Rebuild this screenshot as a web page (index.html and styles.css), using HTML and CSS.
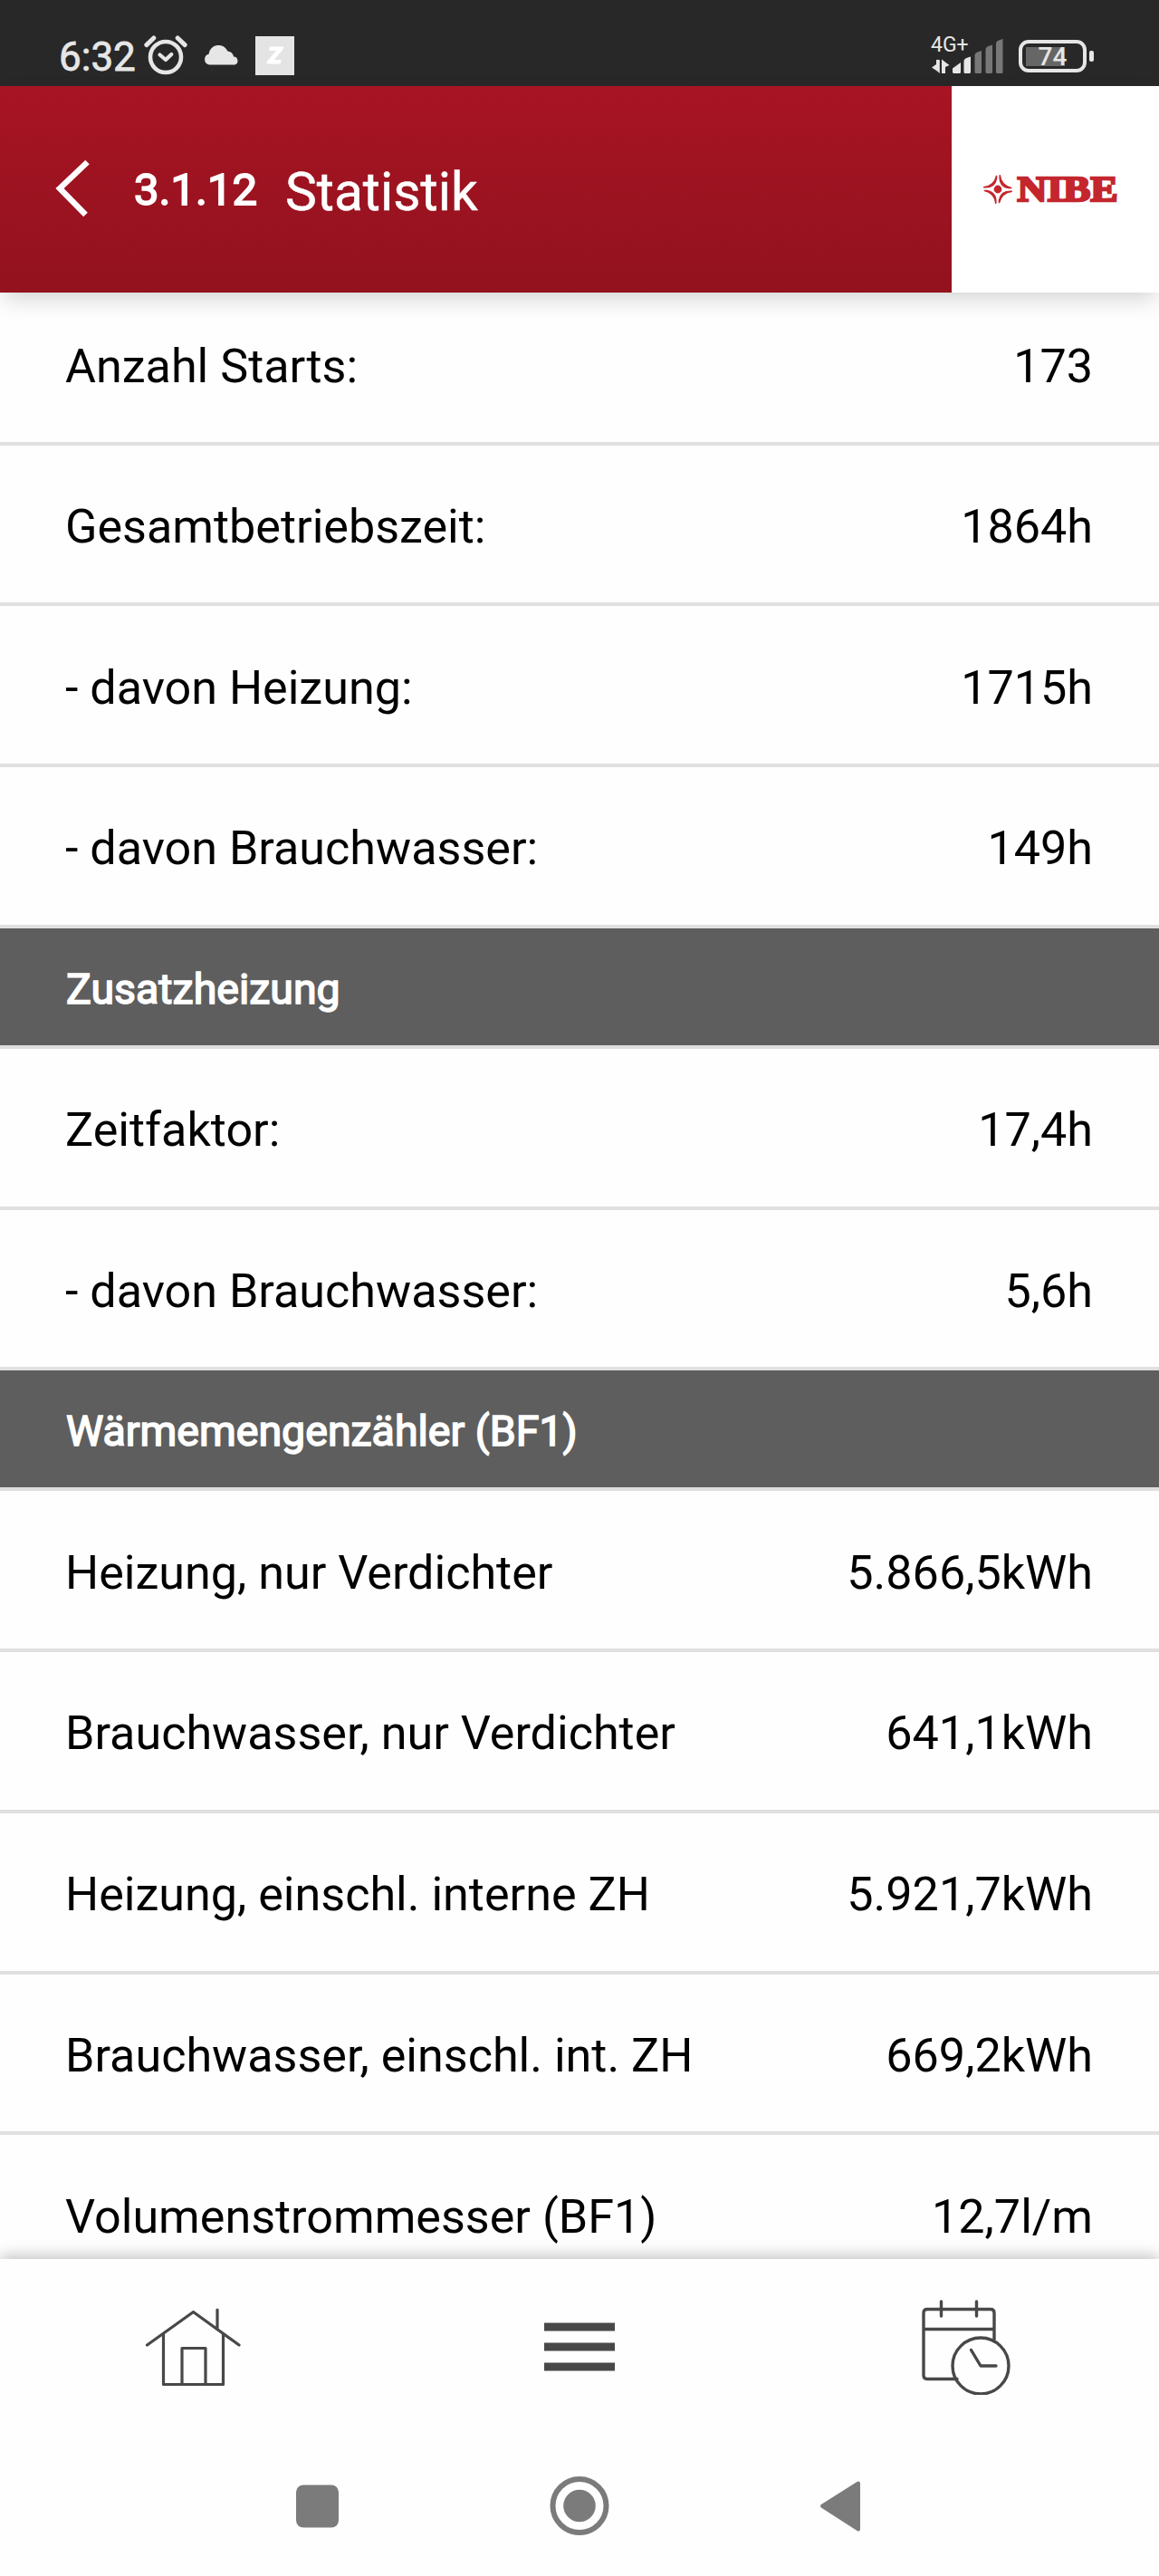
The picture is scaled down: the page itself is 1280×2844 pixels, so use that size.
FILE: index.html
```html
<!DOCTYPE html>
<html lang="de">
<head>
  <meta charset="UTF-8">
  <meta name="viewport" content="width=device-width, initial-scale=1.0">
  <title>3.1.12 Statistik</title>
  <link rel="stylesheet" href="styles.css">
</head>
<body>
  <div class="status-bar">
    <div class="status-left">
      <span class="clock">6:32</span>
      <svg class="alarm" width="48" height="44" viewBox="0 0 48 44" fill="none" stroke="#e6e6e6" stroke-linecap="round">
        <circle cx="24" cy="24" r="17" stroke-width="4.6"/>
        <path d="M2.8 10.6l8-7.6M37.2 3l8 7.6" stroke-width="5"/>
        <path d="M17.5 21.5l6.5 5.5 6.3-6" stroke-width="4.2" stroke-linejoin="round"/>
      </svg>
      <svg class="cloud" width="40" height="23" viewBox="0 0 40 23" fill="#e6e6e6">
        <path d="M6 22.5A6 6 0 0 1 5.5 10.8 11 11 0 0 1 26.5 7.5 7.5 7.5 0 0 1 33 13.6 4.6 4.6 0 0 1 34.5 22.5z"/>
      </svg>
      <span class="app-badge">Z</span>
    </div>
    <div class="status-right">
      <div class="signal">
        <span class="network">4G+</span>
        <svg class="bars" width="84" height="40" viewBox="0 0 84 40">
          <g fill="#e6e6e6">
            <path d="M1 31.500L6 28V23h3.800V38L7 35.500zM12 38V22.500l8.500 6.500-4.500 2v7z"/>
            <path d="M24 32.500l9-6.500V36.500q0 1.500-1.500 1.500h-6q-1.500 0-1.500-1.500zM36.500 25q0-3 3-4l4.500-1.500V36.500q0 1.500-1.500 1.500h-4.500q-1.500 0-1.500-1.500z"/>
          </g>
          <g fill="#777">
            <path d="M48.500 18.500q0-3 3-4l4.500-1.500V36.500q0 1.500-1.500 1.500h-4.500q-1.500 0-1.500-1.500z"/>
            <path d="M60.500 12q0-3 3-4l4.500-1.500V36.500q0 1.500-1.500 1.500h-4.500q-1.500 0-1.500-1.500z"/>
            <path d="M72 5.500q0-3 3-4l4.500-1.500V36.500q0 1.500-1.500 1.500h-4.500q-1.500 0-1.500-1.500z"/>
          </g>
        </svg>
      </div>
      <div class="battery"><span>74</span></div>
    </div>
  </div>

  <header class="header">
    <div class="title-bar">
      <svg class="back" width="42" height="66" viewBox="0 0 42 66" fill="none" stroke="#fff" stroke-width="6.5">
        <path d="M38.500 5L8 34l28.500 29"/>
      </svg>
      <span class="menu-number">3.1.12</span>
      <h1>Statistik</h1>
    </div>
    <div class="logo">
      <svg width="152" height="60" viewBox="0 -13 152 60" fill="#c4262e">
        <circle cx="17" cy="17" r="4.4"/>
        <path id="ray" d="M1.200 14.800Q13 13.500 15.600 1.800L15.600 5Q13.500 16 1.200 14.800z" stroke="#c4262e" stroke-width="1.4"/>
        <use href="#ray" transform="rotate(90 17 17)"/>
        <use href="#ray" transform="rotate(180 17 17)"/>
        <use href="#ray" transform="rotate(270 17 17)"/>
        <text x="38.500" y="30" textLength="111" lengthAdjust="spacingAndGlyphs">NIBE</text>
      </svg>
    </div>
  </header>

  <main class="content">
    <div class="row"><span>Anzahl Starts:</span><span>173</span></div>
    <div class="row"><span>Gesamtbetriebszeit:</span><span>1864h</span></div>
    <div class="row"><span>- davon Heizung:</span><span>1715h</span></div>
    <div class="row"><span>- davon Brauchwasser:</span><span>149h</span></div>
    <h2>Zusatzheizung</h2>
    <div class="row"><span>Zeitfaktor:</span><span>17,4h</span></div>
    <div class="row"><span>- davon Brauchwasser:</span><span>5,6h</span></div>
    <h2>Wärmemengenzähler (BF1)</h2>
    <div class="row"><span>Heizung, nur Verdichter</span><span>5.866,5kWh</span></div>
    <div class="row"><span>Brauchwasser, nur Verdichter</span><span>641,1kWh</span></div>
    <div class="row"><span>Heizung, einschl. interne ZH</span><span>5.921,7kWh</span></div>
    <div class="row"><span>Brauchwasser, einschl. int. ZH</span><span>669,2kWh</span></div>
    <div class="row"><span>Volumenstrommesser (BF1)</span><span>12,7l/m</span></div>
  </main>

  <nav class="tab-bar">
    <svg width="106" height="86" viewBox="0 0 106 86" fill="none" stroke="#484848" stroke-width="3.2" stroke-linejoin="round" stroke-linecap="round">
      <path d="M2.500 41L53.500 4.500 104 41M80 2v21M20.500 29v55.500h66V29M41 84V44.500h26V84"/>
    </svg>
    <svg width="78" height="54" viewBox="0 0 78 54" fill="#484848">
      <path d="M0 .5h78v9H0zM0 22.500h78v9H0zM0 44.500h78v9H0z"/>
    </svg>
    <svg width="98" height="106" viewBox="0 0 98 106" fill="none" stroke="#484848" stroke-width="3.4" stroke-linecap="round">
      <path d="M39 88.500H6q-4 0-4-4V15.500q0-4 4-4h70q4 0 4 4V45M2 33.500h78M21.500 3v16M60.500 3v16"/>
      <circle cx="65" cy="74" r="31"/>
      <path d="M54.500 56.500L65 74h17" stroke-linejoin="round"/>
    </svg>
  </nav>

  <div class="system-nav">
    <svg width="66" height="66" viewBox="0 0 66 66" fill="#7b7b7b">
      <rect x="9" y="10.500" width="47" height="47" rx="8"/>
    </svg>
    <svg width="66" height="66" viewBox="0 0 66 66" fill="#7b7b7b">
      <circle cx="33" cy="33.500" r="29.500" fill="none" stroke="#7b7b7b" stroke-width="6"/>
      <circle cx="33" cy="33.500" r="17.800"/>
    </svg>
    <svg width="66" height="66" viewBox="0 0 66 66" fill="#7b7b7b" stroke="#7b7b7b" stroke-width="4" stroke-linejoin="round">
      <path d="M52 8.500v51L12 33.800z"/>
    </svg>
  </div>
</body>
</html>
```
FILE: styles.css
```css
* {
  box-sizing: border-box;
}

body {
  margin: 0;
  height: 2844px;
  display: flex;
  flex-direction: column;
  overflow: hidden;
  background: #fefefe;
  color: #000;
  font-family: Roboto, sans-serif;
}

svg {
  display: block;
  flex: none;
}

.status-bar {
  height: 95px;
  flex: none;
  display: flex;
  justify-content: space-between;
  padding: 0 80px 0 65px;
  background: #282828;
  color: #e6e6e6;
}

.status-left,
.status-right {
  display: flex;
  align-items: flex-start;
}

.clock {
  width: 94px;
  margin-top: 37px;
  font-size: 44px;
  line-height: 52px;
  -webkit-text-stroke: 0.8px #e6e6e6;
}

.alarm {
  margin-top: 39px;
}

.cloud {
  margin: 49px 17px 0 18px;
}

.app-badge {
  width: 43px;
  height: 43px;
  margin-top: 40px;
  background: #e4e4e4;
  color: #fff;
  font-size: 26px;
  font-weight: 900;
  font-style: italic;
  line-height: 43px;
  text-align: center;
  -webkit-text-stroke: 1px #fff;
}

.signal {
  position: relative;
  width: 84px;
  margin-right: 13px;
  padding-top: 43px;
}

.network {
  position: absolute;
  top: 36px;
  left: 0;
  font-size: 23px;
  line-height: 28px;
}

.battery {
  position: relative;
  width: 75px;
  height: 36px;
  margin-top: 44px;
  border: 4px solid #e6e6e6;
  border-radius: 11px;
  background: linear-gradient(#666, #666) 4px 4px / 43px 21px no-repeat;
  font-size: 28px;
  font-weight: 500;
  line-height: 29px;
  text-align: center;
}

.battery::after {
  content: "";
  position: absolute;
  top: 8px;
  right: -12px;
  width: 5px;
  height: 12px;
  border-radius: 2px;
  background: #e6e6e6;
}

.header {
  position: relative;
  z-index: 1;
  height: 228px;
  flex: none;
  display: flex;
  box-shadow: 0 10px 24px -4px rgba(0, 0, 0, 0.18);
}

.title-bar {
  flex: 1;
  display: flex;
  align-items: flex-start;
  padding-left: 58px;
  background: linear-gradient(#a81423, #92121e);
  color: #fff;
}

.back {
  margin-top: 79px;
}

.menu-number {
  width: 167px;
  margin-left: 48px;
  font-size: 49px;
  line-height: 230px;
  -webkit-text-stroke: 1.8px #fff;
}

h1 {
  margin: 0;
  font-size: 58.6px;
  font-weight: 400;
  line-height: 234px;
  -webkit-text-stroke: 0.5px #fff;
}

.logo {
  width: 229px;
  display: flex;
  align-items: center;
  padding-left: 34px;
  background: #fff;
}

.logo text {
  font: bold 39px "Liberation Serif", serif;
  stroke: #c4262e;
  stroke-width: 2.4px;
}

.content {
  height: 2171px;
  flex: none;
  overflow: hidden;
}

.row {
  height: 177.75px;
  display: flex;
  align-items: center;
  justify-content: space-between;
  padding: 6px 73px 0 72px;
  border-bottom: 4px solid #e0e0e0;
  font-size: 52.1px;
}

/* partly scrolled under the header */
.row:first-child {
  height: 168.5px;
  padding: 0 73px 2px 72px;
}

h2 {
  height: 133px;
  margin: 0;
  padding: 3px 72px 0 73px;
  border-bottom: 4px solid #dedede;
  background: #5e5e5e;
  color: #fff;
  font-size: 46.5px;
  font-weight: 400;
  line-height: 129px;
  -webkit-text-stroke: 1.6px #fff;
}

.tab-bar {
  position: relative;
  z-index: 1;
  height: 194px;
  flex: none;
  display: grid;
  grid-template-columns: repeat(3, 1fr);
  align-items: center;
  justify-items: center;
  background: #fefefe;
  box-shadow: 0 -3px 16px rgba(0, 0, 0, 0.25);
}

.system-nav {
  position: relative;
  z-index: 2;
  height: 156px;
  flex: none;
  display: flex;
  align-items: center;
  justify-content: center;
  gap: 223px;
  background: #fefefe;
}
```
